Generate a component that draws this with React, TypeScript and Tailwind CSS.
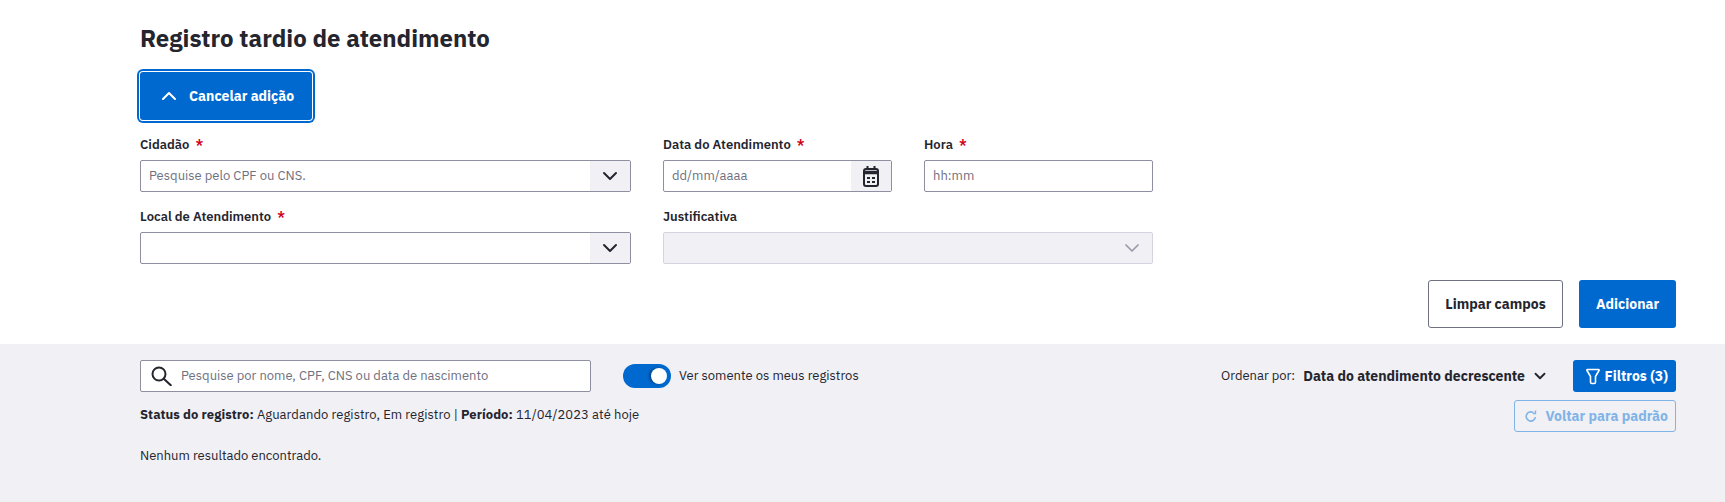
import { ChevronDown, ChevronUp } from "lucide-react";

function Label({ text, required }: { text: string; required?: boolean }) {
  return (
    <div className="flex h-[20px] items-center text-[13px] font-semibold text-[#24252e]">
      {text}
      {required && <span className="ml-[6px] text-[14px] font-semibold text-[#d0021b]">*</span>}
    </div>
  );
}

function CalendarIcon() {
  return (
    <svg width="16" height="21" viewBox="0 0 16 21" fill="none">
      <rect x="1" y="3" width="14" height="17" rx="2" stroke="#24252e" strokeWidth="2" />
      <path d="M1 6.5h14" stroke="#24252e" strokeWidth="3.5" />
      <path d="M4.5 0v3M11.5 0v3" stroke="#24252e" strokeWidth="2" />
      <path d="M4 11h3v2h-3zM9 11h3v2h-3zM4 15h3v2h-3zM9 15h3v2h-3z" fill="#24252e" />
    </svg>
  );
}

function SearchIcon() {
  return (
    <svg width="21" height="20" viewBox="0 0 21 20" fill="none" className="ml-[10px]">
      <circle cx="8" cy="8" r="6.5" stroke="#24252e" strokeWidth="2" />
      <path d="M12.8 12.8 19.8 19.3" stroke="#24252e" strokeWidth="2" strokeLinecap="round" />
    </svg>
  );
}

function SelectBox({ placeholder }: { placeholder?: string }) {
  return (
    <div className="mt-[5px] flex h-[32px] items-center overflow-hidden rounded-[2px] border border-[#8f8fa2] bg-white">
      <span className="flex-1 pl-2 text-[13px] text-[#6f7080]">{placeholder}</span>
      <span className="flex h-full w-[40px] items-center justify-center bg-[#f0f0f5]">
        <ChevronDown size={24} strokeWidth={2} className="text-[#24252e]" />
      </span>
    </div>
  );
}

export default function App() {
  return (
    <div className="flex min-h-[502px] flex-col bg-[#f0f0f5] font-['IBM_Plex_Sans','Noto_Sans',sans-serif] text-[#24252e]">
      <section className="h-[344px] bg-white pl-[140px] pr-[49px] pt-[23px]">
        <h1 className="text-[24px] leading-[30px] font-bold">Registro tardio de atendimento</h1>

        <button className="mt-[19px] flex h-[48px] w-[172px] items-center gap-2 rounded-[3px] bg-[#0069d0] px-[17px] text-[14px] font-bold text-white shadow-[0_0_0_1px_#fff,0_0_0_3px_#0069d0]">
          <ChevronUp size={24} strokeWidth={2} />
          Cancelar adição
        </button>

        <div className="mt-[15px] grid grid-cols-[491px_229px_229px] gap-x-[32px] gap-y-[15px]">
          <div>
            <Label text="Cidadão" required />
            <SelectBox placeholder="Pesquise pelo CPF ou CNS." />
          </div>
          <div>
            <Label text="Data do Atendimento" required />
            <div className="mt-[5px] flex h-[32px] items-center overflow-hidden rounded-[2px] border border-[#8f8fa2] bg-white">
              <span className="flex-1 pl-2 text-[13px] text-[#6f7080]">dd/mm/aaaa</span>
              <span className="flex h-full w-[40px] items-center justify-center bg-[#f0f0f5]">
                <CalendarIcon />
              </span>
            </div>
          </div>
          <div>
            <Label text="Hora" required />
            <div className="mt-[5px] flex h-[32px] items-center rounded-[2px] border border-[#8f8fa2] bg-white pl-2 text-[13px] text-[#6f7080]">
              hh:mm
            </div>
          </div>
          <div>
            <Label text="Local de Atendimento" required />
            <SelectBox />
          </div>
          <div className="col-span-2">
            <Label text="Justificativa" />
            <div className="mt-[5px] flex h-[32px] items-center justify-end rounded-[2px] border border-[#d3d4dd] bg-[#f0f0f5] pr-[8px]">
              <ChevronDown size={24} strokeWidth={1.75} className="text-[#9a9aa8]" />
            </div>
          </div>
        </div>

        <div className="mt-[16px] flex justify-end gap-[16px]">
          <button className="h-[48px] w-[135px] rounded-[3px] border border-[#6f7080] bg-white text-[14px] font-bold">
            Limpar campos
          </button>
          <button className="h-[48px] w-[97px] rounded-[3px] bg-[#0069d0] text-[14px] font-bold text-white">
            Adicionar
          </button>
        </div>
      </section>

      <section className="flex-1 pl-[140px] pr-[49px] pt-[16px] text-[13px]">
        <div className="flex items-center">
          <div className="flex h-[32px] w-[451px] items-center rounded-[2px] border border-[#8f8fa2] bg-white">
            <SearchIcon />
            <span className="ml-[9px] text-[#6f7080]">Pesquise por nome, CPF, CNS ou data de nascimento</span>
          </div>
          <div className="ml-[32px] flex h-[24px] w-[48px] items-center justify-end rounded-full bg-[#0069d0] pr-[4px]">
            <span className="h-[16px] w-[16px] rounded-full bg-white shadow-[-2px_0_3px_rgba(0,0,0,0.35)]" />
          </div>
          <span className="ml-[8px]">Ver somente os meus registros</span>
          <div className="ml-auto flex items-center">
            <span>Ordenar por:</span>
            <span className="ml-[8px] text-[14px] font-bold">Data do atendimento decrescente</span>
            <ChevronDown size={18} strokeWidth={2.5} className="ml-[6px]" />
            <button className="ml-[24px] flex h-[32px] w-[103px] items-center justify-end gap-[5px] rounded-[3px] bg-[#0069d0] pr-2 text-[14px] font-bold text-white">
              <svg width="14" height="17" viewBox="0 0 14 17" fill="none">
                <path d="M1.5 1.5h11c.6 0 .8.6.5 1L9.5 8.5V14c0 .8-.5 1.5-1.3 1.5H5.8c-.8 0-1.3-.7-1.3-1.5V8.5L1 2.5c-.3-.4-.1-1 .5-1z" stroke="#fff" strokeWidth="1.6" strokeLinejoin="round" />
              </svg>
              Filtros (3)
            </button>
          </div>
        </div>

        <div className="mt-[8px] flex items-start justify-between">
          <p className="mt-[5px] leading-[20px] tracking-[0.06px]">
            <b className="font-bold">Status do registro:</b> Aguardando registro, Em registro | <b className="font-bold">Período:</b> 11/04/2023 até hoje
          </p>
          <button className="flex h-[32px] w-[162px] items-center justify-end gap-[9px] rounded-[3px] border border-[#80b4e7] pr-[7px] text-[14px] font-bold text-[#80b4e7]">
            <svg width="12" height="12" viewBox="0 0 12 12" fill="none">
              <path d="M8.3 2.6A4.6 4.6 0 1 0 10.4 7" stroke="#80b4e7" strokeWidth="1.6" />
              <path d="M10.5 0.5v3h-2.5" stroke="#80b4e7" strokeWidth="1.4" />
            </svg>
            Voltar para padrão
          </button>
        </div>

        <p className="mt-[14px] leading-[20px]">Nenhum resultado encontrado.</p>
      </section>
    </div>
  );
}
